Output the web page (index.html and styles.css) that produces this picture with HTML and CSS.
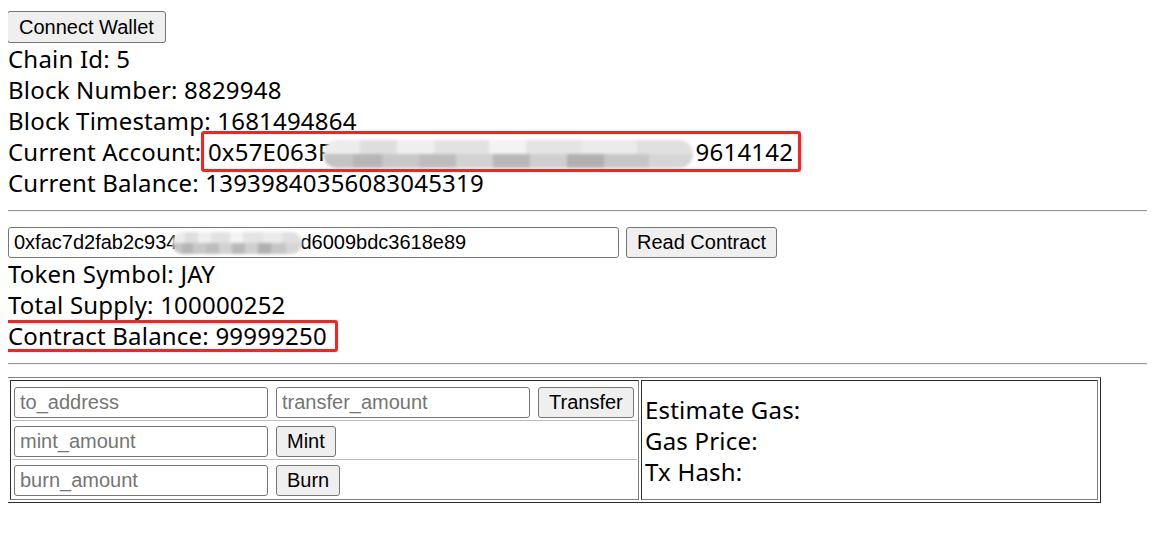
FILE: index.html
```html
<!DOCTYPE html>
<html>
<head>
<meta charset="utf-8">
<title>Wallet</title>
<link rel="stylesheet" href="styles.css">
</head>
<body>
<div class="top">
  <button class="btn btn-connect">Connect Wallet</button>
</div>
<div class="info">
  <div class="line">Chain Id: 5</div>
  <div class="line">Block Number: 8829948</div>
  <div class="line">Block Timestamp: 1681494864</div>
  <div class="line">Current Account: <span class="mark mark-account">0x57E063F<span class="blur blur-account"></span>9614142</span></div>
  <div class="line">Current Balance: 13939840356083045319</div>
</div>
<div class="rule rule-first"></div>
<div class="contract-row">
  <div class="field field-contract"><span>0xfac7d2fab2c934</span><span class="blur blur-input"></span><span>d6009bdc3618e89</span></div>
  <button class="btn">Read Contract</button>
</div>
<div class="info">
  <div class="line">Token Symbol: JAY</div>
  <div class="line">Total Supply: 100000252</div>
  <div class="line"><span class="mark mark-balance">Contract Balance: 99999250</span></div>
</div>
<div class="rule"></div>
<div class="panel">
  <div class="cell cell-actions">
    <div class="action-row">
      <input class="field field-small" placeholder="to_address">
      <input class="field field-small" placeholder="transfer_amount">
      <button class="btn">Transfer</button>
    </div>
    <div class="action-row">
      <input class="field field-small" placeholder="mint_amount">
      <button class="btn">Mint</button>
    </div>
    <div class="action-row action-row-last">
      <input class="field field-small" placeholder="burn_amount">
      <button class="btn">Burn</button>
    </div>
  </div>
  <div class="cell cell-status">
    <div class="line">Estimate Gas:</div>
    <div class="line">Gas Price:</div>
    <div class="line">Tx Hash:</div>
  </div>
</div>
</body>
</html>
```

FILE: styles.css
```css
html, body {
  background: #ffffff;
}
html {
  overflow: hidden;
}
body {
  margin: 8px;
  font-family: "Noto Sans", "Open Sans", sans-serif;
  font-size: 24px;
  letter-spacing: 0.2px;
  color: #000;
}
.top {
  display: flex;
  padding-top: 3px;
  margin-left: -1px;
}
.btn {
  font-family: "Liberation Sans", Arial, sans-serif;
  font-size: 20px;
  letter-spacing: 0;
  height: 32px;
  padding: 0 10px;
  margin: 0;
  background: #efefef;
  color: #000;
  border: 1px solid #767676;
  border-radius: 3px;
  line-height: 30px;
}
.btn-connect {
  padding: 0 11px;
}
.info .line,
.cell-status .line {
  line-height: 31px;
  height: 31px;
  white-space: nowrap;
}
.mark {
  position: relative;
  display: inline-block;
}
.mark::after {
  content: "";
  position: absolute;
  border: 3px solid #ff1f1f;
  border-radius: 3px;
  pointer-events: none;
  z-index: 2;
}
.mark-account::after {
  top: -5px;
  bottom: -3px;
  left: -7px;
  right: -8px;
}
.mark-balance::after {
  top: 0;
  bottom: -1px;
  left: -7px;
  right: -11px;
}
.blur {
  display: inline-block;
  vertical-align: middle;
  border-radius: 14px;
  filter: blur(1.5px);
  position: relative;
  z-index: 1;
  background:
    linear-gradient(to right, #ececec 0 10%, #dedede 10% 20%, #efefef 20% 30%, #e2e2e2 30% 45%, #f3f3f3 45% 55%, #e4e4e4 55% 70%, #ebebeb 70% 85%, #e0e0e0 85%) top / 100% 50% no-repeat,
    linear-gradient(to right, #c4c4c4 0 8%, #b6b6b6 8% 16%, #c8c8c8 16% 26%, #bdbdbd 26% 36%, #d2d2d2 36% 46%, #b8b8b8 46% 56%, #cfcfcf 56% 66%, #b0b0b0 66% 76%, #c6c6c6 76% 88%, #d6d6d6 88%) bottom / 100% 50% no-repeat;
}
.blur-account {
  width: 370px;
  height: 28px;
  margin-left: -8px;
  margin-right: 3px;
  top: -1px;
}
.blur-input {
  width: 130px;
  height: 22px;
  margin-left: -5px;
  margin-right: -2px;
  top: 0;
}
.rule {
  width: calc(100vw - 8px);
  height: 0;
  border-top: 1px solid #9a9a9a;
  border-bottom: 1px solid #eeeeee;
  margin: 12px 0 12px;
}
.rule-first {
  margin-bottom: 15px;
}
.contract-row {
  display: flex;
  gap: 7px;
  height: 31px;
}
.contract-row .btn {
  height: 31px;
  line-height: 29px;
}
.field {
  box-sizing: border-box;
  font-family: "Liberation Sans", Arial, sans-serif;
  font-size: 20px;
  letter-spacing: 0;
  color: #000;
  height: 31px;
  border: 1px solid #767676;
  border-radius: 3px;
  padding: 0 5px;
  margin: 0;
  background: #fff;
  outline: none;
}
.field::placeholder {
  color: #757575;
}
.field-contract {
  width: 611px;
  display: flex;
  align-items: center;
  white-space: nowrap;
  overflow: hidden;
}
.panel {
  display: grid;
  grid-template-columns: 629px 457px;
  gap: 2px;
  padding: 2px;
  width: max-content;
  border: 1px outset #808080;
  margin-left: -1px;
}
.cell {
  border: 1px inset #808080;
  padding: 1px;
}
.action-row {
  display: flex;
  gap: 8px;
  padding: 5px 1px 2px 2px;
  border-bottom: 1px solid #bdbdbd;
}
.action-row-last {
  border-bottom: 0;
}
.field-small {
  width: 254px;
}
.action-row .btn {
  height: 31px;
  line-height: 29px;
}
.cell-status {
  display: flex;
  flex-direction: column;
  justify-content: center;
  padding-left: 3px;
}
```
